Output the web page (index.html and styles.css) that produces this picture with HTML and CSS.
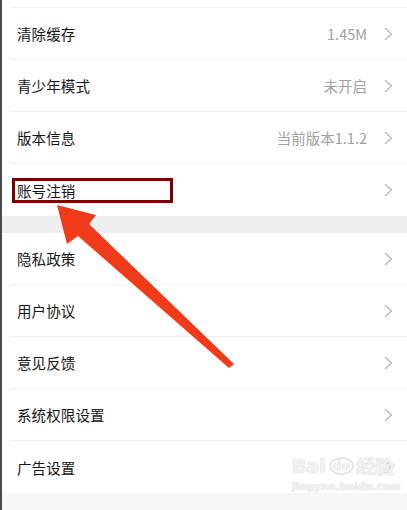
FILE: index.html
```html
<!DOCTYPE html>
<html lang="zh">
<head>
<meta charset="utf-8">
<link rel="stylesheet" href="styles.css">
</head>
<body>
<div class="page">
  <div class="group first">
    <div class="row"><span class="label">清除缓存</span><span class="value">1.45M</span><span class="chev"><svg width="9" height="14" viewBox="0 0 9 14"><path d="M1 1 L7.5 7 L1 13" fill="none" stroke="#b4b4b4" stroke-width="1.2"/></svg></span></div>
    <div class="row"><span class="label">青少年模式</span><span class="value">未开启</span><span class="chev"><svg width="9" height="14" viewBox="0 0 9 14"><path d="M1 1 L7.5 7 L1 13" fill="none" stroke="#b4b4b4" stroke-width="1.2"/></svg></span></div>
    <div class="row"><span class="label">版本信息</span><span class="value">当前版本1.1.2</span><span class="chev"><svg width="9" height="14" viewBox="0 0 9 14"><path d="M1 1 L7.5 7 L1 13" fill="none" stroke="#b4b4b4" stroke-width="1.2"/></svg></span></div>
    <div class="row last"><span class="label boxed">账号注销</span><span class="value"></span><span class="chev"><svg width="9" height="14" viewBox="0 0 9 14"><path d="M1 1 L7.5 7 L1 13" fill="none" stroke="#b4b4b4" stroke-width="1.2"/></svg></span></div>
  </div>
  <div class="gap"></div>
  <div class="group">
    <div class="row"><span class="label">隐私政策</span><span class="value"></span><span class="chev"><svg width="9" height="14" viewBox="0 0 9 14"><path d="M1 1 L7.5 7 L1 13" fill="none" stroke="#b4b4b4" stroke-width="1.2"/></svg></span></div>
    <div class="row"><span class="label">用户协议</span><span class="value"></span><span class="chev"><svg width="9" height="14" viewBox="0 0 9 14"><path d="M1 1 L7.5 7 L1 13" fill="none" stroke="#b4b4b4" stroke-width="1.2"/></svg></span></div>
    <div class="row"><span class="label">意见反馈</span><span class="value"></span><span class="chev"><svg width="9" height="14" viewBox="0 0 9 14"><path d="M1 1 L7.5 7 L1 13" fill="none" stroke="#b4b4b4" stroke-width="1.2"/></svg></span></div>
    <div class="row"><span class="label">系统权限设置</span><span class="value"></span><span class="chev"><svg width="9" height="14" viewBox="0 0 9 14"><path d="M1 1 L7.5 7 L1 13" fill="none" stroke="#b4b4b4" stroke-width="1.2"/></svg></span></div>
    <div class="row last"><span class="label">广告设置</span><span class="value"></span><span class="chev"><svg width="9" height="14" viewBox="0 0 9 14"><path d="M1 1 L7.5 7 L1 13" fill="none" stroke="#b4b4b4" stroke-width="1.2"/></svg></span></div>
  </div>
  <div class="gap bottom"></div>

  <svg class="arrow" width="407" height="510" viewBox="0 0 407 510">
    <polygon points="57,205 96,215 89,224 234,364 229,368 78,236 67,244" fill="#f03b1a"/>
  </svg>

  <div class="watermark">
    <div class="wm-top"><span>Bai</span><span class="paw">du</span><span>经验</span></div>
    <div class="wm-url">jingyan.baidu.com</div>
  </div>
</div>
</body>
</html>
```
FILE: styles.css
```css
html, body {
  margin: 0;
  padding: 0;
  background: #fff;
}
.page {
  position: relative;
  width: 407px;
  height: 510px;
  overflow: hidden;
  box-sizing: border-box;
  border-left: 2px solid #4a4a4a;
  padding-top: 7px;
  font-family: "Noto Sans CJK SC", "Noto Sans", sans-serif;
  background: #fff;
}
.group {
  background: #fff;
}
.group.first {
  border-top: 1px solid #f3f3f3;
  margin-left: 8px;
}
.group.first .row {
  margin-left: 0;
  padding-left: 7px;
}
.row {
  display: flex;
  align-items: center;
  height: 51px;
  border-bottom: 1px solid #f0f0f0;
  margin-left: 8px;
  padding-left: 7px;
  padding-right: 14px;
}
.row.last {
  border-bottom: none;
  height: 52px;
}
.label {
  font-size: 14.5px;
  color: #151515;
  letter-spacing: 0.1px;
}
.boxed {
  display: inline-block;
  box-sizing: border-box;
  width: 161px;
  height: 25px;
  line-height: 19px;
  border: 3px solid #7a0000;
  padding-left: 2px;
  margin-left: -5px;
}
.value {
  margin-left: auto;
  font-size: 14.5px;
  color: #a0a0a0;
  margin-right: 17px;
}
.chev {
  display: flex;
  align-items: center;
}
.gap {
  height: 17px;
  background: #efefef;
}
.gap.bottom {
  height: 30px;
  background: #f6f6f6;
}
.arrow {
  position: absolute;
  left: -2px;
  top: 0;
}
.watermark {
  position: absolute;
  left: 290px;
  top: 455px;
  color: #f2f2f2;
  font-family: "DejaVu Sans", sans-serif;
  font-weight: bold;
  text-shadow: 0 0 1px #d4d4d4, 0 0 1px #d4d4d4;
}
.wm-top {
  display: flex;
  align-items: center;
  gap: 3px;
  font-size: 19px;
  line-height: 22px;
}
.paw {
  font-size: 12px;
  border: 2px solid #e6e6e6;
  border-radius: 50%;
  padding: 1px 2px;
  line-height: 12px;
}
.wm-url {
  font-size: 10px;
  margin-top: 4px;
  letter-spacing: 0.3px;
}
```
